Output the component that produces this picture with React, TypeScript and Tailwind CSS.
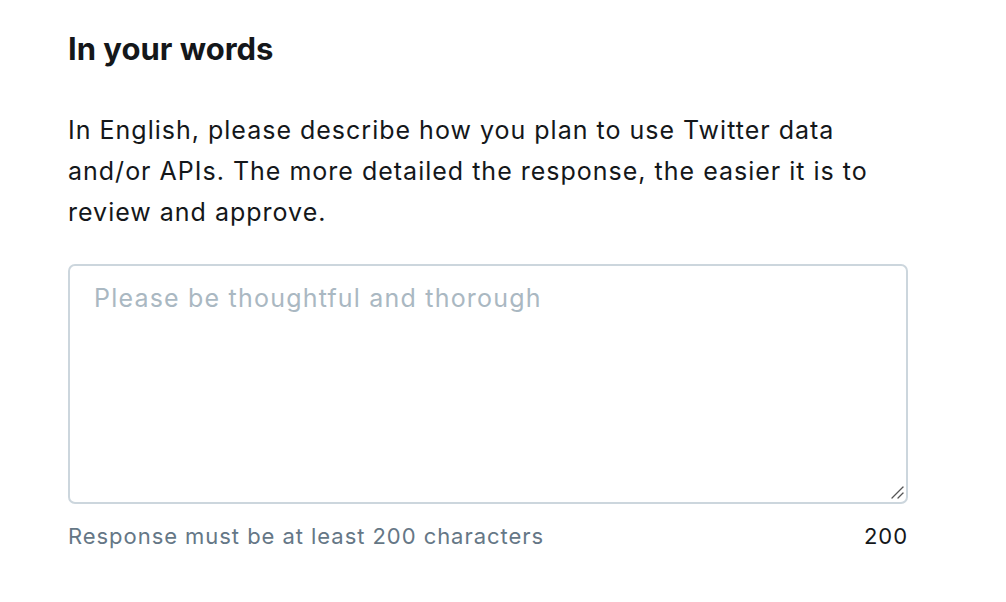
export default function App() {
  return (
    <div className="min-h-screen bg-white" style={{ fontFamily: 'Inter, "Noto Sans", sans-serif' }}>
      <div className="w-[840px] ml-[68px] pt-[29px]">
        <h2 className="text-[31px] leading-[40px] font-bold text-[#14171a]">In your words</h2>
        <p className="mt-[41px] text-[25px] leading-[41px] tracking-[1px] text-[#14171a]">
          In English, please describe how you plan to use Twitter data and/or APIs. The more detailed the response, the easier it is to review and approve.
        </p>
        <div className="relative mt-[31px]">
          <textarea
            className="block w-full h-[240px] rounded-[7px] border-2 border-[#ccd6dd] px-[24px] py-[14px] text-[25px] leading-[36px] tracking-[1.2px] text-[#14171a] placeholder:text-[#aab8c2] outline-none resize-none"
            placeholder="Please be thoughtful and thorough"
          />
          {/* resize grip */}
          <svg className="absolute right-[4px] bottom-[5px] pointer-events-none" width="14" height="14" viewBox="0 0 14 14">
            <path d="M2 13 L13 2" stroke="#555" strokeWidth="1.3" strokeLinecap="round" />
            <path d="M8 13 L13 8" stroke="#555" strokeWidth="1.3" strokeLinecap="round" />
          </svg>
        </div>
        <div className="mt-[17px] flex justify-between text-[22px] leading-[30px] tracking-[0.95px]">
          <span className="text-[#657786]">Response must be at least 200 characters</span>
          <span className="text-[#14171a]">200</span>
        </div>
      </div>
    </div>
  )
}
